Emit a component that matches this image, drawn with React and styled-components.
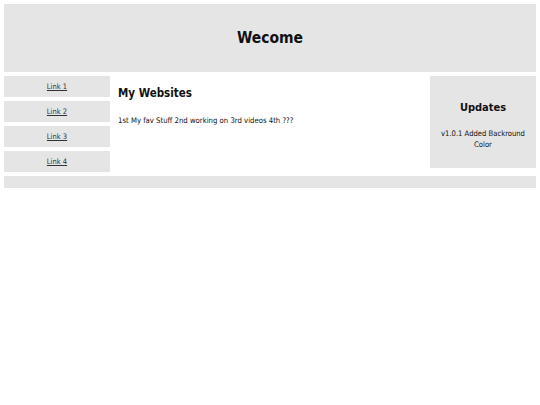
import styled, { createGlobalStyle } from "styled-components";

const GlobalStyle = createGlobalStyle`
  body {
    margin: 0;
    background: #ffffff;
    font-family: "DejaVu Sans Condensed", "DejaVu Sans", sans-serif;
    color: #111;
  }
`;

const Page = styled.div`
  display: grid;
  grid-template-columns: 106px 1fr 106px;
  grid-template-rows: 68px auto 12px;
  gap: 4px 0;
  padding: 4px;
`;

const Header = styled.header`
  grid-column: 1 / -1;
  background: #e5e5e5;
  display: flex;
  align-items: center;
  justify-content: center;

  h1 {
    margin: 0;
    font-size: 15.5px;
    font-weight: bold;
  }
`;

const Sidebar = styled.nav`
  display: flex;
  flex-direction: column;
  gap: 4px;
`;

const NavLink = styled.a`
  display: flex;
  align-items: center;
  justify-content: center;
  height: 21px;
  background: #e5e5e5;
  color: #333;
  font-size: 7.5px;
  text-decoration: underline;
`;

const Main = styled.main`
  padding: 0 8px;

  h2 {
    margin: 12px 0 17px;
    font-size: 11.5px;
    line-height: 1;
  }

  p {
    margin: 0;
    font-size: 7.7px;
    line-height: 1;
  }
`;

const Aside = styled.aside`
  align-self: start;
  height: 92px;
  background: #e5e5e5;
  text-align: center;
  padding: 0 2px;
  box-sizing: border-box;
  overflow: hidden;

  h3 {
    margin: 26px 0 15px;
    font-size: 11px;
    line-height: 1;
  }

  p {
    margin: 0;
    font-size: 7.6px;
    line-height: 11px;
  }
`;

const Footer = styled.footer`
  grid-column: 1 / -1;
  background: #e5e5e5;
`;

const links = ["Link 1", "Link 2", "Link 3", "Link 4"];

export default function App() {
  return (
    <>
      <GlobalStyle />
      <Page>
        <Header>
          <h1>Wecome</h1>
        </Header>
        <Sidebar>
          {links.map((l) => (
            <NavLink key={l} href="#">
              {l}
            </NavLink>
          ))}
        </Sidebar>
        <Main>
          <h2>My Websites</h2>
          <p>1st My fav Stuff 2nd working on 3rd videos 4th ???</p>
        </Main>
        <Aside>
          <h3>Updates</h3>
          <p>v1.0.1 Added Backround Color</p>
        </Aside>
        <Footer />
      </Page>
    </>
  );
}
